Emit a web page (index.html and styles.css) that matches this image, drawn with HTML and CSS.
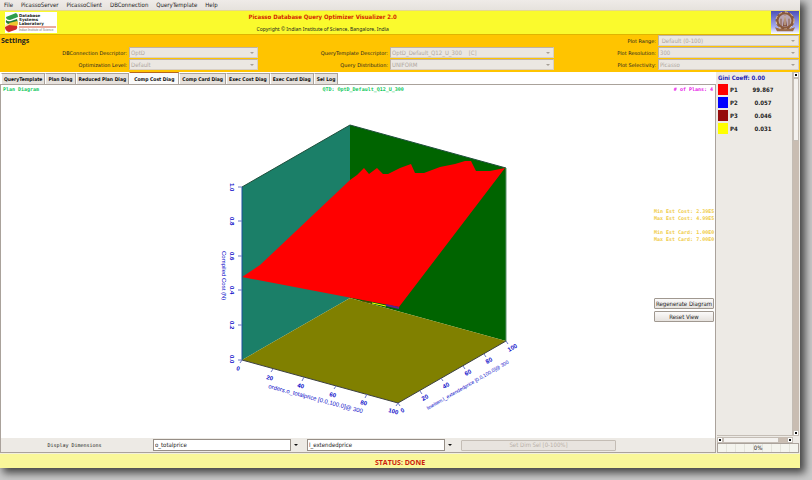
FILE: index.html
```html
<!DOCTYPE html>
<html lang="en">
<head>
  <meta charset="UTF-8">
  <meta name="viewport" content="width=device-width, initial-scale=1">
  <title>Picasso Database Query Optimizer Visualizer 2.0</title>
  <link rel="stylesheet" href="styles.css">
</head>
<body>
  <div class="window">
    <nav class="menubar">
      <button type="button">File</button>
      <button type="button">PicassoServer</button>
      <button type="button">PicassoClient</button>
      <button type="button">DBConnection</button>
      <button type="button">QueryTemplate</button>
      <button type="button">Help</button>
    </nav>

    <header class="banner">
      <svg class="lab-logo" viewBox="0 0 52 21" role="img" aria-label="Database Systems Laboratory">
        <rect width="52" height="21" fill="#fff"/>
        <path d="M0 13L5 9L8 18L3 21Z" fill="#f6e9a8"/>
        <path d="M1 5L11 1Q13 2 13 5L5 8Q1 8 1 5Z" fill="#2f9e4c"/>
        <path d="M1 8Q3 10 6 9L12 7Q13 9 12 11L5 12Q0 12 1 8Z" fill="#1f7a3a"/>
        <path d="M4 11L12 9Q14 11 12 14L5 15Z" fill="#efc52e"/>
        <path d="M0 15L4 13L12 14Q13 17 10 18L4 20Q0 19 0 15Z" fill="#cf2a2a"/>
        <g font-family="DejaVu Sans, sans-serif" font-weight="bold" font-size="4" fill="#222">
          <text x="14" y="5">Database</text>
          <text x="14" y="9">Systems</text>
          <text x="14" y="13">Laboratory</text>
        </g>
        <path d="M14 15H51" stroke="#d4593f" stroke-width="1"/>
        <text x="14" y="19" font-family="Liberation Sans, sans-serif" font-size="3" fill="#777">Indian Institute of Science</text>
      </svg>
      <div class="banner-text">
        <h1>Picasso Database Query Optimizer Visualizer 2.0</h1>
        <p>Copyright © Indian Institute of Science, Bangalore, India</p>
      </div>
      <svg class="emblem" viewBox="0 0 28 24" preserveAspectRatio="none" aria-hidden="true">
        <defs>
          <linearGradient id="sky" x1="0" y1="0" x2="0" y2="1">
            <stop offset="0" stop-color="#4a4fb8"/>
            <stop offset="0.7" stop-color="#a9aef0"/>
            <stop offset="1" stop-color="#fff"/>
          </linearGradient>
        </defs>
        <rect width="28" height="24" fill="url(#sky)"/>
        <circle cx="14" cy="10" r="8" fill="#b9a6b4" stroke="#8a5a3c" stroke-width="3"/>
        <circle cx="14" cy="10" r="9" fill="none" stroke="#e6cfae" stroke-width="1" stroke-dasharray="3 3"/>
        <path d="M14 3L16 16H12Z" fill="#7a4630"/>
        <path d="M14 5V15" stroke="#f0dfc4" stroke-width="1"/>
        <path d="M10 8V16M18 8V16" stroke="#8a5a3c" stroke-width="1"/>
        <path d="M4 17Q14 21 24 17L22 21H6Z" fill="#9a6a48"/>
      </svg>
    </header>

    <form class="settings">
      <h2>Settings</h2>
      <label for="range">Plot Range:</label>
      <span class="combo"><select id="range" disabled><option>&nbsp;Default (0-100)</option></select></span>

      <label for="conn">DBConnection Descriptor:</label>
      <span class="combo"><select id="conn" disabled><option>OptD</option></select></span>
      <label for="template">QueryTemplate Descriptor:</label>
      <span class="combo"><select id="template" disabled><option>OptD_Default_Q12_U_300 &nbsp;&nbsp; [C]</option></select></span>
      <label for="resolution">Plot Resolution:</label>
      <span class="combo"><select id="resolution" disabled><option>300</option></select></span>

      <label for="level">Optimization Level:</label>
      <span class="combo"><select id="level" disabled><option>Default</option></select></span>
      <label for="dist">Query Distribution:</label>
      <span class="combo"><select id="dist" disabled><option>UNIFORM</option></select></span>
      <label for="selectivity">Plot Selectivity:</label>
      <span class="combo"><select id="selectivity" disabled><option>Picasso</option></select></span>
    </form>

    <main>
      <section class="viewer">
        <div class="tabs" role="tablist">
          <button type="button" role="tab">QueryTemplate</button>
          <button type="button" role="tab">Plan Diag</button>
          <button type="button" role="tab">Reduced Plan Diag</button>
          <button type="button" role="tab" class="active" aria-selected="true">Comp Cost Diag</button>
          <button type="button" role="tab">Comp Card Diag</button>
          <button type="button" role="tab">Exec Cost Diag</button>
          <button type="button" role="tab">Exec Card Diag</button>
          <button type="button" role="tab">Sel Log</button>
        </div>

        <div class="panel">
          <div class="caption">
            <span class="name">Plan Diagram</span>
            <span class="qtd">QTD: OptD_Default_Q12_U_300</span>
            <span class="plans"># of Plans: 4</span>
          </div>

          <div class="plot">
            <svg class="chart" viewBox="1 93 653 345" role="img" aria-label="Compiled cost surface">
              <!-- walls and floor -->
              <path d="M242 187L350 125V298L242 360Z" fill="#1b7f68"/>
              <path d="M350 125L506 168V341L350 298Z" fill="#006400"/>
              <path d="M242 360L350 298L506 341L398 403Z" fill="#808000"/>
              <path d="M242 187L350 125L506 168" fill="none" stroke="#1f4f3c" stroke-width="1"/>
              <path d="M506 168V341" stroke="#5f8f6f" stroke-width="1"/>
              <!-- cost surface -->
              <path d="M242 277L260 265L277 249L350 180L357 175L364 168L369 174L377 168L383 174L388 174L400 168L411 164L415 173L424 173L440 167L455 164L465 161L471 161L476 171L490 171L505 168L399 307Z" fill="#f00"/>
              <path d="M362 301L372 303" stroke="#5a4a00" stroke-width="1"/>
              <path d="M372 303L386 306" stroke="#ff0" stroke-width="1"/>
              <path d="M386 305L399 308" stroke="#60208c" stroke-width="2"/>
              <!-- axes -->
              <path d="M242 187V360" stroke="#1c4fa0" stroke-width="1"/>
              <path d="M242 360L398 403L506 341" fill="none" stroke="#3c4040" stroke-width="1"/>
              <g stroke="#6c78c8" stroke-width="1">
                <path d="M238 187H242M238 221H242M238 256H242M238 290H242M238 325H242M238 360H242"/>
                <path d="M242 360L240 363M273 369L271 372M304 377L302 381M336 386L334 389M367 394L365 398M398 403L396 406"/>
                <path d="M398 403L400 406M420 391L422 394M441 378L443 381M463 366L465 369M484 354L486 357M506 341L508 344"/>
              </g>
              <g class="tick">
                <text transform="translate(230 183) rotate(90)">1.0</text>
                <text transform="translate(230 217) rotate(90)">0.8</text>
                <text transform="translate(230 252) rotate(90)">0.6</text>
                <text transform="translate(230 286) rotate(90)">0.4</text>
                <text transform="translate(230 321) rotate(90)">0.2</text>
                <text transform="translate(230 355) rotate(90)">0.0</text>
                <text transform="translate(236 370) rotate(15)">0</text>
                <text transform="translate(266 379) rotate(15)">20</text>
                <text transform="translate(297 387) rotate(15)">40</text>
                <text transform="translate(329 396) rotate(15)">60</text>
                <text transform="translate(360 404) rotate(15)">80</text>
                <text transform="translate(388 412) rotate(15)">100</text>
                <text transform="translate(402 413) rotate(-30)">0</text>
                <text transform="translate(423 401) rotate(-30)">20</text>
                <text transform="translate(444 389) rotate(-30)">40</text>
                <text transform="translate(466 376) rotate(-30)">60</text>
                <text transform="translate(487 364) rotate(-30)">80</text>
                <text transform="translate(509 352) rotate(-30)">100</text>
              </g>
              <text class="axis axis-z" transform="translate(222 251) rotate(90)">Compiled Cost (N)</text>
              <text class="axis axis-x" transform="translate(268 388) rotate(15)">orders.o_totalprice [0.0,100.0]@ 300</text>
              <text class="axis axis-y" transform="translate(428 410) rotate(-30)">lineitem.l_extendedprice [0.0,100.0]@ 300</text>
            </svg>

            <aside class="stats">
              <p>Min Est Cost: 2.39E5<br>Max Est Cost: 4.99E5</p>
              <p>Min Est Card: 1.00E0<br>Max Est Card: 7.00E0</p>
              <div class="actions">
                <button type="button" class="btn">Regenerate Diagram</button>
                <button type="button" class="btn">Reset View</button>
              </div>
            </aside>
          </div>

          <div class="dims">
            <span class="dims-label" id="dims-label">Display Dimensions</span>
            <span class="picker"><select aria-labelledby="dims-label"><option>o_totalprice</option></select></span>
            <span class="picker"><select aria-labelledby="dims-label"><option>l_extendedprice</option></select></span>
            <button type="button" class="btn" disabled>Set Dim Sel [0-100%]</button>
          </div>
        </div>
      </section>

      <aside class="legend">
        <div class="scroll-area">
          <div class="legend-body">
            <h3>Gini Coeff: 0.00</h3>
            <table>
              <tr><td class="swatch p1"></td><th>P1</th><td>99.867</td></tr>
              <tr><td class="swatch p2"></td><th>P2</th><td>0.057</td></tr>
              <tr><td class="swatch p3"></td><th>P3</th><td>0.046</td></tr>
              <tr><td class="swatch p4"></td><th>P4</th><td>0.031</td></tr>
            </table>
          </div>
          <div class="vbar">
            <span class="arrow"></span>
            <span class="vthumb"></span>
            <span class="vtrack"></span>
            <span class="arrow"></span>
          </div>
        </div>
        <div class="hbar">
          <span class="arrow"></span>
          <span class="hthumb"></span>
          <span class="htrack"></span>
          <span class="arrow"></span>
        </div>
        <div class="progress">0%</div>
      </aside>
    </main>

    <footer class="status">STATUS: DONE</footer>
  </div>
</body>
</html>
```
FILE: styles.css
```css
* { box-sizing: border-box; }
body { margin: 0; background: #cacaca; color: #222; font: 6px/8px "DejaVu Sans Condensed", "DejaVu Sans", sans-serif; }
h1, h2, h3, p { margin: 0; }
button, select { margin: 0; font: inherit; color: inherit; border-radius: 0; }

.window { display: flex; flex-direction: column; min-height: calc(100vh - 12px); margin: 0 12px 12px 0; background: #edeae5; box-shadow: 4px 4px 8px 1px #444; }

/* menu bar */
.menubar { display: flex; gap: 8px; height: 10px; padding: 0 4px; background: linear-gradient(#efebe8, #e6e2dd); }
.menubar button { padding: 0; border: 0; background: none; }

/* banner */
.banner { display: flex; align-items: center; justify-content: space-between; height: 24px; padding: 0 1px 0 5px; background: #fafa2d; border-top: 1px solid #e6d98c; }
.lab-logo { width: 52px; height: 21px; }
.emblem { width: 28px; height: 23px; }
.banner-text { flex: 1; padding-right: 23%; text-align: center; }
.banner h1 { margin-bottom: 4px; font-size: 6px; line-height: 8px; color: #d42a00; }
.banner p { font-family: "Noto Sans", sans-serif; font-size: 5px; }

/* settings */
.settings { display: grid; grid-template-columns: 126fr 129fr 128fr 164fr 100fr 141fr; column-gap: 2px; row-gap: 1px; align-content: start; align-items: center; height: 38px; padding: 0 1px; background: #ffc400; border-top: 1px solid #e0b400; }
.settings h2 { grid-column: 1 / 5; font: bold 7px/9px "Open Sans", sans-serif; }
.settings label { font-family: "DejaVu Sans", sans-serif; font-size: 5px; text-align: right; }
.combo { position: relative; display: block; height: 11px; }
.combo select { display: block; width: 100%; height: 11px; padding: 0 14px 0 1px; border: 1px solid #d8cfc4; border-top-color: #bfb3a5; border-left-color: #bfb3a5; background: #ebe7e2; color: #b0a8a0; opacity: 1; appearance: none; }
.combo::after { content: ""; position: absolute; top: 5px; right: 4px; border: 2px solid transparent; border-top-color: #a79f96; border-bottom: 0; }

/* tabs */
main { display: flex; flex: 1; }
.viewer { display: flex; flex: 1; flex-direction: column; min-width: 0; }
.tabs { display: flex; align-items: flex-end; height: 12px; padding-left: 1px; background: #fff; }
.tabs button { height: 11px; padding: 0 2px; border: 1px solid #aaa29b; border-left-color: #fff; border-bottom: 0; background: #e6e1dc; font-size: 5px; font-weight: bold; color: #111; white-space: nowrap; }
.tabs .active { height: 12px; padding: 0 4px; border-top-color: #b5651d; background: #fafafa; }

/* diagram panel */
.panel { display: flex; flex: 1; flex-direction: column; border: 1px solid #aaa29b; background: #fff; }
.caption { display: grid; grid-template-columns: 45% auto 1fr; padding: 0 2px; font: bold 5px/8px "DejaVu Sans Mono", monospace; }
.caption .name, .caption .qtd { color: #0fc85a; }
.caption .plans { color: #e818e8; text-align: right; }
.plot { display: flex; flex: 1; }
.chart { flex: 1; min-width: 0; }
.tick, .axis { font-family: "Liberation Sans", sans-serif; fill: #0808c8; }
.tick { font-size: 6px; font-weight: bold; }
.axis { font-size: 6px; }
.axis-y { font-size: 5px; }
.stats { display: flex; flex-direction: column; gap: 7px; width: 61px; padding: 115px 1px 0 0; font: bold 5px/7px "DejaVu Sans Mono", monospace; color: #f0cc48; white-space: nowrap; }
.actions { display: flex; flex-direction: column; gap: 2px; margin-top: 48px; }
.btn { height: 11px; padding: 0; border: 1px solid #a09890; border-radius: 1px; background: linear-gradient(#fbfafa, #e6e2de); color: #222; font: 6px/8px "DejaVu Sans Condensed", sans-serif; white-space: nowrap; }
.btn:disabled { border-color: #c4bdb5; background: #e8e4df; color: #b8b0a8; }

/* dimension pickers */
.dims { display: grid; grid-template-columns: 145fr 148fr 148fr 155fr 92fr; column-gap: 6px; align-items: center; height: 14px; padding: 0 1px; background: #edeae5; }
.dims-label { font: 5px/8px "DejaVu Sans Mono", monospace; text-align: center; }
.picker { display: flex; align-items: center; }
.picker select { flex: 1; min-width: 0; height: 12px; padding: 0 1px; border: 1px solid #968e86; background: #fff; appearance: none; }
.picker::after { content: ""; margin: 0 3px; border: 2px solid transparent; border-top-color: #111; border-bottom: 0; }

/* legend */
.legend { display: flex; flex-direction: column; width: 84px; padding: 0 1px; }
.scroll-area { display: flex; flex: 1; }
.legend-body { flex: 1; padding: 2px 0 0 1px; border-right: 1px solid #c4bdb5; border-bottom: 1px solid #c4bdb5; }
.legend h3 { font-size: 6px; line-height: 8px; color: #2424b4; }
.legend table { width: 100%; border-spacing: 0 2px; font-weight: bold; }
.legend td, .legend th { height: 11px; padding: 0 0 0 2px; color: #222; }
.legend th { width: 14px; text-align: left; }
.legend td { padding-right: 10px; text-align: center; }
.legend .swatch { width: 10px; padding: 0; }
.p1 { background: #f00; }
.p2 { background: #00f; }
.p3 { background: #960c0c; }
.p4 { background: #ff0; }

/* scroll bars */
.vbar { display: flex; flex-direction: column; width: 6px; }
.vthumb { height: 63px; border: 1px solid #c4bdb5; background: #f4f2ef; }
.vtrack { flex: 1; background: #c9bdb2; }
.hbar { display: flex; height: 6px; margin: 1px 6px 0 0; }
.hthumb { flex: 1; border: 1px solid #c4bdb5; background: #f4f2ef; }
.htrack { width: 8px; background: #c9bdb2; }
.arrow { display: grid; place-items: center; width: 6px; height: 6px; border: 1px solid #c4bdb5; background: #fff; }
.arrow::after { content: ""; width: 2px; height: 2px; background: #111; }
.progress { height: 10px; border: 1px solid #aaa29b; background: repeating-linear-gradient(90deg, #f4f4ee 0 8px, #e4e4dc 8px 9px); text-align: center; }

.status { height: 15px; border-top: 1px solid #f2f0dc; background: #f9f79a; color: #cc1c0c; font: bold 7px/18px "Open Sans", sans-serif; text-align: center; }
```
